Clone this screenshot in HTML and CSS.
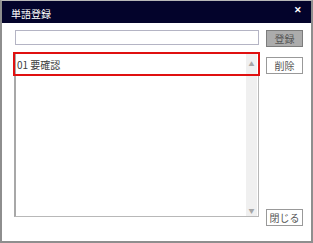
FILE: index.html
```html
<!DOCTYPE html>
<html lang="ja">
<head>
  <meta charset="UTF-8">
  <title>単語登録</title>
  <link rel="stylesheet" href="styles.css">
</head>
<body>

<div class="dialog">
  <div class="titlebar">
    <span class="title">単語登録</span>
    <span class="close">✕</span>
  </div>

  <div class="content">
    <div class="left">
      <input type="text" class="word-input">
      <div class="list">
        <div class="rows">
          <div class="row">01 要確認</div>
        </div>
        <div class="scrollbar">
          <span class="arrow">▲</span>
          <span class="arrow">▼</span>
        </div>
        <div class="highlight"></div>
      </div>
    </div>

    <div class="right">
      <button class="btn btn-add">登録</button>
      <button class="btn btn-del">削除</button>
      <button class="btn btn-close">閉じる</button>
    </div>
  </div>
</div>

</body>
</html>
```

FILE: styles.css
```css
* { margin: 0; padding: 0; box-sizing: border-box; }

body {
  font-family: "Noto Sans CJK JP", "Noto Sans", sans-serif;
  background: #ffffff;
}

.dialog {
  width: 313px;
  height: 243px;
  border: 2px solid #8e8e8e;
  border-top: 1px solid #b8b8b8;
  background: #ffffff;
  display: flex;
  flex-direction: column;
}

.titlebar {
  height: 22px;
  background: #03032b;
  color: #ffffff;
  display: flex;
  align-items: center;
  justify-content: space-between;
  padding: 2px 9px 0 9px;
  font-size: 10px;
}

.close {
  font-size: 9px;
  font-weight: bold;
  margin-top: -8px;
  margin-right: 0;
}

.content {
  flex: 1;
  display: flex;
  gap: 7px;
  padding: 7px 8px 15px 12px;
}

.left {
  width: 245px;
  display: flex;
  flex-direction: column;
  gap: 8px;
  padding-bottom: 9px;
}

.word-input {
  height: 15px;
  border: 1px solid #b4b4c4;
  margin-left: 1px;
  outline: none;
}

.list {
  flex: 1;
  position: relative;
  display: flex;
  border: 1px solid #b8b8b8;
  border-left: 2px solid #a8a8a8;
  border-top-color: #d0d0d0;
}

.rows {
  flex: 1;
}

.row {
  height: 21px;
  line-height: 21px;
  font-size: 10px;
  color: #404040;
  padding-left: 1px;
}

.scrollbar {
  width: 11px;
  background: #f0f0f0;
  display: flex;
  flex-direction: column;
  justify-content: space-between;
  align-items: center;
  padding: 6px 0 1px 0;
  margin-right: 1px;
}

.arrow {
  font-size: 6px;
  color: #a6a6a6;
  line-height: 8px;
}

.highlight {
  position: absolute;
  top: -2px;
  left: -3px;
  width: 247px;
  height: 24px;
  border: 2px solid #e01010;
}

.right {
  width: 37px;
  display: flex;
  flex-direction: column;
}

.btn {
  height: 17px;
  font-family: inherit;
  font-size: 10px;
  color: #555555;
  background: #ffffff;
  border: 1px solid #999999;
  line-height: 15px;
}

.btn-add {
  background: #acacac;
  border-color: #7c7c7c;
}

.btn-del {
  margin-top: 10px;
}

.btn-close {
  margin-top: auto;
}
```
